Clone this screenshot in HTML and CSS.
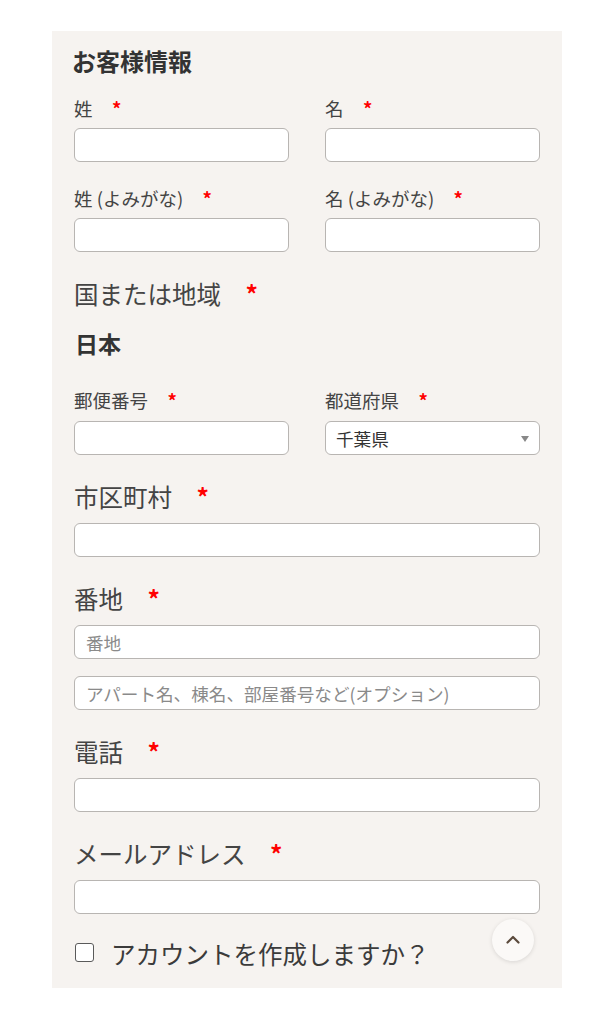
FILE: index.html
```html
<!DOCTYPE html>
<html lang="ja">
<head>
    <meta charset="UTF-8">
    <meta name="viewport" content="width=device-width, initial-scale=1.0">
    <title>お客様情報</title>
    <link rel="stylesheet" href="styles.css">
</head>
<body>
    <div class="checkout-panel">
        <h3 class="section-title">お客様情報</h3>

        <!-- name rows -->
        <div class="field-row first-row">
            <div class="field">
                <label class="label-small">姓<span class="required">*</span></label>
                <input type="text" class="text-input">
            </div>
            <div class="field">
                <label class="label-small">名<span class="required">*</span></label>
                <input type="text" class="text-input">
            </div>
        </div>
        <div class="field-row kana-row">
            <div class="field">
                <label class="label-small">姓 (よみがな)<span class="required">*</span></label>
                <input type="text" class="text-input">
            </div>
            <div class="field">
                <label class="label-small">名 (よみがな)<span class="required">*</span></label>
                <input type="text" class="text-input">
            </div>
        </div>

        <div class="country-block">
            <label class="label-large">国または地域<span class="required">*</span></label>
            <div class="country-value">日本</div>
        </div>

        <div class="field-row postal-row">
            <div class="field">
                <label class="label-small">郵便番号<span class="required">*</span></label>
                <input type="text" class="text-input">
            </div>
            <div class="field">
                <label class="label-small">都道府県<span class="required">*</span></label>
                <div class="select-wrap">
                    <select class="select-input">
                        <option>千葉県</option>
                    </select>
                </div>
            </div>
        </div>

        <div class="field-block">
            <label class="label-large">市区町村<span class="required">*</span></label>
            <input type="text" class="text-input">
        </div>

        <div class="field-block">
            <label class="label-large">番地<span class="required">*</span></label>
            <input type="text" class="text-input" placeholder="番地">
            <input type="text" class="text-input extra-input" placeholder="アパート名、棟名、部屋番号など(オプション)">
        </div>

        <div class="field-block">
            <label class="label-large">電話<span class="required">*</span></label>
            <input type="tel" class="text-input">
        </div>

        <div class="field-block">
            <label class="label-large">メールアドレス<span class="required">*</span></label>
            <input type="email" class="text-input">
        </div>

        <label class="account-check">
            <span class="check-box"></span>
            アカウントを作成しますか？
        </label>

        <!-- floating back-to-top -->
        <a class="to-top" href="#">
            <svg width="18" height="18" viewBox="0 0 18 18">
                <path d="M3.5 11.5 L9 6 L14.5 11.5" fill="none" stroke="#5b4a3c" stroke-width="2.2" stroke-linecap="round" stroke-linejoin="round"/>
            </svg>
        </a>
    </div>
</body>
</html>
```

FILE: styles.css
```css
body {
    margin: 0;
    background-color: #ffffff;
    font-family: "Noto Sans CJK JP", "Noto Sans", sans-serif;
    color: #3b3b3b;
}

.checkout-panel {
    position: relative;
    width: 510px;
    margin: 31px auto 0;
    padding: 12px 22px 16px;
    box-sizing: border-box;
    background-color: #f6f3f0;
}

.section-title {
    margin: 0;
    font-size: 24px;
    line-height: 36px;
    font-weight: 700;
    color: #333;
    margin-left: -2px;
}

.field-row {
    display: flex;
    gap: 36px;
}

.field-row .field {
    flex: 1;
    display: flex;
    flex-direction: column;
}

.first-row {
    margin-top: 16px;
}

.kana-row {
    margin-top: 23px;
}

.postal-row {
    margin-top: 26px;
}

.label-small {
    display: block;
    font-size: 18.5px;
    line-height: 27px;
    margin-bottom: 6px;
    color: #444;
}

.postal-row .label-small {
    margin-bottom: 7px;
}

.label-large {
    display: block;
    font-size: 24.5px;
    line-height: 36px;
    margin-bottom: 8px;
    color: #444;
}

.required {
    color: #ff0000;
    font-weight: 700;
    margin-left: 1em;
}

.label-small .required {
    margin-left: 1.05em;
}

.text-input,
.select-input {
    display: block;
    width: 100%;
    height: 34px;
    box-sizing: border-box;
    border: 1px solid #b8b5b2;
    border-radius: 6px;
    background-color: #ffffff;
    padding: 0 11px;
    font-family: "Noto Sans CJK JP", "Noto Sans", sans-serif;
    font-size: 17.6px;
    color: #333;
    outline: none;
}

.text-input::placeholder {
    color: #8a8a8a;
}

.extra-input {
    margin-top: 17px;
}

.select-wrap {
    position: relative;
}

.select-input {
    appearance: none;
    -webkit-appearance: none;
    padding-left: 10px;
}

.select-wrap::after {
    content: "";
    position: absolute;
    right: 11px;
    top: 15px;
    border-left: 4.5px solid transparent;
    border-right: 4.5px solid transparent;
    border-top: 6px solid #888;
}

.country-block {
    margin-top: 24px;
}

.country-block .label-large {
    margin-bottom: 0;
}

.country-value {
    margin-top: 13px;
    font-size: 23px;
    line-height: 36px;
    font-weight: 700;
    color: #333;
    padding-left: 1px;
}

.field-block {
    margin-top: 24px;
}

.account-check {
    display: flex;
    align-items: center;
    margin-top: 22px;
    font-size: 24.5px;
    line-height: 36px;
    color: #3b3b3b;
}

.check-box {
    width: 19px;
    height: 19px;
    box-sizing: border-box;
    border: 1.5px solid #5a5a5a;
    border-radius: 3px;
    background-color: #fff;
    margin-left: 1px;
    margin-right: 17px;
    margin-top: -4px;
}

.to-top {
    position: absolute;
    right: 28px;
    bottom: 27px;
    width: 42px;
    height: 42px;
    border-radius: 50%;
    background-color: #fbf9f7;
    box-shadow: 0 1px 4px rgba(0, 0, 0, 0.12);
    display: flex;
    align-items: center;
    justify-content: center;
}
```
